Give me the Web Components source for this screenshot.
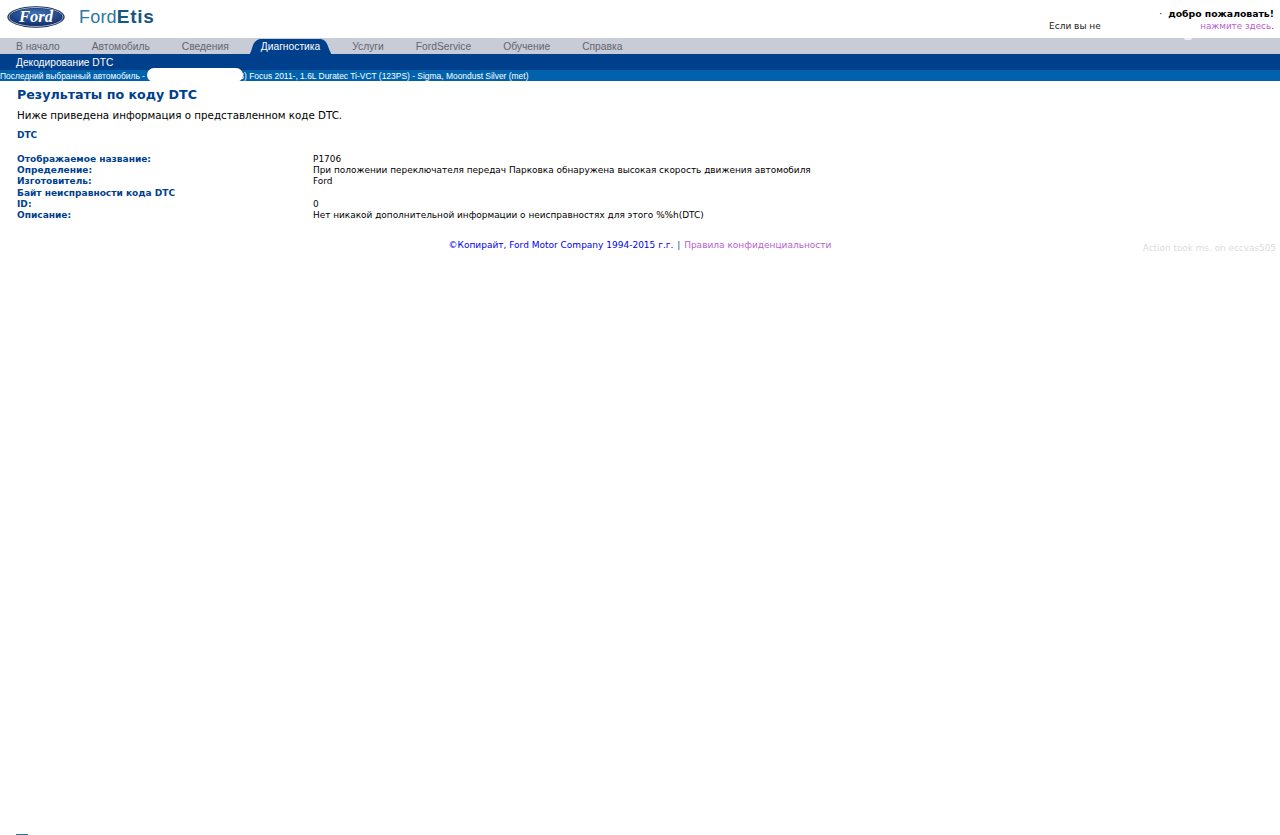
<!DOCTYPE html>
<html lang="ru">
<head>
<meta charset="utf-8">
<title>FordEtis</title>
<style>
html, body { margin: 0; padding: 0; background: #fff; height: 100%; overflow: hidden; }
body { display: flex; flex-direction: column; font-family: "DejaVu Sans", Verdana, sans-serif; font-size: 10px; color: #000; }
</style>
</head>
<body>
<etis-header></etis-header>
<etis-nav active="Диагностика"></etis-nav>
<etis-subnav>Декодирование DTC</etis-subnav>
<etis-vehicle>Последний выбранный автомобиль - <span style="display:inline-block;width:92px"></span>8) Focus 2011-, 1.6L Duratec Ti-VCT (123PS) - Sigma, Moondust Silver (met)</etis-vehicle>
<dtc-result>
  <dtc-row label="Отображаемое название:">P1706</dtc-row>
  <dtc-row label="Определение:">При положении переключателя передач Парковка обнаружена высокая скорость движения автомобиля</dtc-row>
  <dtc-row label="Изготовитель:">Ford</dtc-row>
  <dtc-row label="Байт неисправности кода DTC"></dtc-row>
  <dtc-row label="ID:">0</dtc-row>
  <dtc-row label="Описание:">Нет никакой дополнительной информации о неисправностях для этого %%h(DTC)</dtc-row>
</dtc-result>
<etis-footer></etis-footer>
<etis-edge></etis-edge>
<script>
class EtisHeader extends HTMLElement {
  connectedCallback() {
    this.attachShadow({ mode: "open" }).innerHTML = `
    <style>
    :host { display: flex; flex: none; height: 38px; justify-content: space-between; }
    .brand { display: flex; align-items: flex-start; padding: 6px 0 0 7px; }
    svg { display: block; }
    .name { font: 18px/22px "Liberation Sans", Arial, sans-serif; color: #2a78a3; margin: 0 0 0 14px; letter-spacing: 0.2px; }
    .name b { font-weight: bold; font-size: 19px; color: #17567f; letter-spacing: 0.7px; }
    .welcome { font-size: 9px; line-height: 12px; display: flex; flex-direction: column; padding-top: 8px; width: 231px; color: #222; }
    .top { text-align: right; padding-right: 6px; font-weight: bold; font-size: 9.3px; color: #000; }
    .top i { font-style: normal; font-weight: normal; margin-right: 6px; }
    .bottom { display: flex; justify-content: space-between; padding-right: 6px; }
    .bottom a { font-size: 8.8px; }
    a { color: #b660d0; }
    </style>
    <div class="brand">
      <svg width="58" height="22" viewBox="0 0 58 22">
        <defs>
          <radialGradient id="oval" cx="50%" cy="30%" r="70%">
            <stop offset="0" stop-color="#3f72b8"/>
            <stop offset="1" stop-color="#12306c"/>
          </radialGradient>
        </defs>
        <ellipse cx="29" cy="11" rx="28.7" ry="10.7" fill="#0d2a5e"/>
        <ellipse cx="29" cy="11" rx="27" ry="9.4" fill="none" stroke="#d5dce8" stroke-width="0.8"/>
        <ellipse cx="29" cy="11" rx="26" ry="8.6" fill="url(#oval)"/>
        <text x="12" y="16" textLength="34" lengthAdjust="spacingAndGlyphs" font-family="Liberation Serif, serif" font-style="italic" font-weight="bold" font-size="17" fill="#fff">Ford</text>
      </svg>
      <div class="name">Ford<b>Etis</b></div>
    </div>
    <div class="welcome">
      <div class="top"><i>·</i>добро пожаловать!</div>
      <div class="bottom"><span>Если вы не</span><span><a>нажмите здесь</a>.</span></div>
    </div>`
  }
}

class EtisNav extends HTMLElement {
  connectedCallback() {
    const items = ["В начало", "Автомобиль", "Сведения", "Диагностика", "Услуги", "FordService", "Обучение", "Справка"]
    const active = this.getAttribute("active")
    this.attachShadow({ mode: "open" }).innerHTML = `
    <style>
    :host { display: flex; flex: none; position: relative; height: 16px; gap: 32px; padding-left: 16px; background: #c8ccd6; font: 10.27px/17px "Liberation Sans", Arial, sans-serif; color: #5f6672; }
    span { white-space: nowrap; }
    .active { background: #003f8c; color: #fff; margin: 0 -11px; padding: 0 11px; clip-path: path("M0 16 C3 12 2 3 10 1 L71 1 C79 2 78 12 82 16 Z"); }
    .speck { position: absolute; left: 1184px; top: 0; width: 8px; height: 2px; background: #eef0f3; border-radius: 0 0 4px 4px; }
    </style>
    ${items.map(i => `<span class="${i === active ? "active" : ""}">${i}</span>`).join("")}
    <div class="speck"></div>`
  }
}

class EtisSubnav extends HTMLElement {
  connectedCallback() {
    this.attachShadow({ mode: "open" }).innerHTML = `
    <style>
    :host { display: block; flex: none; height: 16px; padding-left: 16px; background: #003f8c; color: #fff; font: 10.2px/17px "Liberation Sans", Arial, sans-serif; }
    </style>
    <slot></slot>`
  }
}

class EtisVehicle extends HTMLElement {
  connectedCallback() {
    this.attachShadow({ mode: "open" }).innerHTML = `
    <style>
    :host { display: block; flex: none; position: relative; height: 11px; background: #0062ad; color: #fff; font: 8.45px/13px "Liberation Sans", Arial, sans-serif; white-space: nowrap; }
    .blot { position: absolute; left: 147px; top: -2px; width: 96px; height: 14px; background: #fff; border-radius: 7px; }
    </style>
    <slot></slot><div class="blot"></div>`
  }
}

class DtcResult extends HTMLElement {
  connectedCallback() {
    this.attachShadow({ mode: "open" }).innerHTML = `
    <style>
    :host { display: block; flex: none; padding: 5px 0 0 17px; }
    h1 { margin: 0; font-size: 12.65px; line-height: 17px; font-weight: bold; color: #003f8c; }
    p { margin: 5px 0 0; font-size: 10.3px; line-height: 14px; }
    h2 { margin: 6px 0 12px; font-size: 9px; line-height: 14px; font-weight: bold; color: #003f8c; }
    </style>
    <h1>Результаты по коду DTC</h1>
    <p>Ниже приведена информация о представленном коде DTC.</p>
    <h2>DTC</h2>
    <slot></slot>`
  }
}

class DtcRow extends HTMLElement {
  connectedCallback() {
    this.attachShadow({ mode: "open" }).innerHTML = `
    <style>
    :host { display: grid; grid-template-columns: 296px 1fr; font-size: 8.93px; line-height: 11.2px; }
    b { font-size: 9.05px; color: #003f8c; }
    </style>
    <b>${this.getAttribute("label")}</b><span><slot></slot></span>`
  }
}

class EtisFooter extends HTMLElement {
  connectedCallback() {
    this.attachShadow({ mode: "open" }).innerHTML = `
    <style>
    :host { display: grid; grid-template-columns: 1fr auto 1fr; align-items: start; margin-top: 18px; font-size: 9px; line-height: 12px; }
    .copy { color: #0000ee; }
    .copy i { font-style: normal; color: #003f8c; margin: 0 1px; }
    .copy a { color: #b660d0; }
    .stat { justify-self: end; font-size: 8.9px; color: #dcdcdc; padding: 3px 4px 0 0; }
    </style>
    <span></span>
    <div class="copy">©Копирайт, Ford Motor Company 1994-2015 г.г. <i>|</i> <a>Правила конфиденциальности</a></div>
    <div class="stat">Action took ms. on eccvas505</div>`
  }
}

// sliver of the next page's logo at the very bottom of the capture
class EtisEdge extends HTMLElement {
  connectedCallback() {
    this.attachShadow({ mode: "open" }).innerHTML = `
    <style>
    :host { display: block; flex: none; margin: auto 0 0 16px; width: 12px; height: 1px; background: #2f6f8f; }
    </style>`
  }
}

customElements.define("etis-header", EtisHeader)
customElements.define("etis-nav", EtisNav)
customElements.define("etis-subnav", EtisSubnav)
customElements.define("etis-vehicle", EtisVehicle)
customElements.define("dtc-result", DtcResult)
customElements.define("dtc-row", DtcRow)
customElements.define("etis-footer", EtisFooter)
customElements.define("etis-edge", EtisEdge)
</script>
</body>
</html>
